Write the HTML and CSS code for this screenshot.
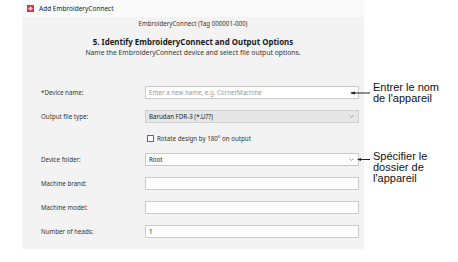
FILE: index.html
```html
<!DOCTYPE html>
<html lang="en">
<head>
    <meta charset="UTF-8">
    <title>Add EmbroideryConnect</title>
    <link rel="stylesheet" href="styles.css">
</head>
<body>
    <div class="page">
        <!-- Dialog window -->
        <div class="dialog">
            <div class="titlebar">
                <svg class="app-icon" width="7" height="7" viewBox="0 0 7 7">
                    <rect width="7" height="7" fill="#e8283c"/>
                    <path d="M3.5 1.2v4.6M1.2 3.5h4.6M1.9 1.9l3.2 3.2M5.1 1.9l-3.2 3.2" stroke="#fff" stroke-width="0.6"/>
                </svg>
                <span>Add EmbroideryConnect</span>
            </div>
            <div class="content">
                <div class="tag">EmbroideryConnect (Tag 000001-000)</div>
                <h2>5. Identify EmbroideryConnect and Output Options</h2>
                <p class="subtitle">Name the EmbroideryConnect device and select file output options.</p>

                <div class="form">
                    <div class="row">
                        <label>*Device name:</label>
                        <div class="field placeholder">Enter a new name, e.g. CornerMachine</div>
                    </div>
                    <div class="row">
                        <label>Output file type:</label>
                        <div class="field select grey">
                            <span>Barudan FDR-3 (*.U??)</span>
                            <svg class="chev" width="5" height="3" viewBox="0 0 5 3"><path d="M0.5 0.5l2 2 2-2" fill="none" stroke="#888" stroke-width="0.8"/></svg>
                        </div>
                    </div>
                    <div class="row check-row">
                        <span></span>
                        <div class="check">
                            <span class="box"></span>
                            <span>Rotate design by 180° on output</span>
                        </div>
                    </div>
                    <div class="row">
                        <label>Device folder:</label>
                        <div class="field select">
                            <span>Root</span>
                            <svg class="chev" width="5" height="3" viewBox="0 0 5 3"><path d="M0.5 0.5l2 2 2-2" fill="none" stroke="#888" stroke-width="0.8"/></svg>
                        </div>
                    </div>
                    <div class="row">
                        <label>Machine brand:</label>
                        <div class="field"></div>
                    </div>
                    <div class="row">
                        <label>Machine model:</label>
                        <div class="field"></div>
                    </div>
                    <div class="row">
                        <label>Number of heads:</label>
                        <div class="field">1</div>
                    </div>
                </div>
            </div>
        </div>

        <!-- Callouts -->
        <svg class="leaders" width="458" height="262" viewBox="0 0 458 262">
            <path d="M351 93h19" stroke="#222" stroke-width="1"/>
            <path d="M350 93l5-1.6v3.2z" fill="#222"/>
            <path d="M358 159.5h12" stroke="#222" stroke-width="1"/>
            <path d="M357 159.5l4-1.4v2.8z" fill="#222"/>
        </svg>
        <div class="callout callout-name">Entrer le nom<br>de l'appareil</div>
        <div class="callout callout-folder">Spécifier le<br>dossier de<br>l'appareil</div>
    </div>
</body>
</html>
```

FILE: styles.css
```css
body {
    margin: 0;
    background-color: #ffffff;
    font-family: "Noto Sans", "Open Sans", sans-serif;
    color: #333333;
}

.page {
    position: relative;
    width: 458px;
    height: 262px;
    overflow: hidden;
}

/* Dialog */
.dialog {
    margin-left: 22px;
    width: 342px;
}

.titlebar {
    height: 17px;
    background-color: #fafafa;
    display: flex;
    align-items: center;
    gap: 5px;
    padding-left: 5px;
    font-size: 6.5px;
    color: #222222;
}

.app-icon {
    display: block;
}

.content {
    background-color: #f3f3f3;
    height: 232px;
    box-sizing: border-box;
    padding-top: 2px;
}

.tag {
    text-align: center;
    font-size: 6.2px;
    line-height: 10px;
    color: #333333;
}

h2 {
    margin: 7px 0 0;
    text-align: center;
    font-size: 7.9px;
    line-height: 12px;
    font-weight: bold;
    color: #1a1a1a;
}

.subtitle {
    margin: 0;
    text-align: center;
    font-size: 6.8px;
    line-height: 9px;
    color: #333333;
}

/* Form rows */
.form {
    margin-top: 29px;
    display: flex;
    flex-direction: column;
    gap: 11px;
}

.row {
    display: grid;
    grid-template-columns: 104px 214px;
    padding-left: 19px;
    align-items: center;
    height: 13px;
}

.row label {
    font-size: 6.2px;
    color: #333333;
}

.field {
    height: 13px;
    box-sizing: border-box;
    background-color: #ffffff;
    border: 1px solid #c9c9c9;
    padding: 0 3px;
    font-size: 6.2px;
    line-height: 11px;
    color: #222222;
    display: flex;
    align-items: center;
}

.placeholder {
    color: #9a9a9a;
}

.select {
    justify-content: space-between;
    padding-right: 4px;
}

.grey {
    background-color: #e6e6e6;
    border-color: #d0d0d0;
}

.chev {
    display: block;
}

.check-row {
    height: 8px;
}

.check {
    display: flex;
    align-items: center;
    gap: 3px;
    padding-left: 2px;
    font-size: 6.2px;
    color: #333333;
}

.box {
    width: 7px;
    height: 7px;
    box-sizing: border-box;
    border: 1px solid #666666;
    background-color: #ffffff;
}

/* Annotation callouts */
.leaders {
    position: absolute;
    left: 0;
    top: 0;
}

.callout {
    position: absolute;
    left: 373px;
    font-family: "Liberation Sans", Arial, sans-serif;
    font-size: 11px;
    line-height: 11px;
    color: #111111;
}

.callout-name {
    top: 82px;
}

.callout-folder {
    top: 151px;
}
```
